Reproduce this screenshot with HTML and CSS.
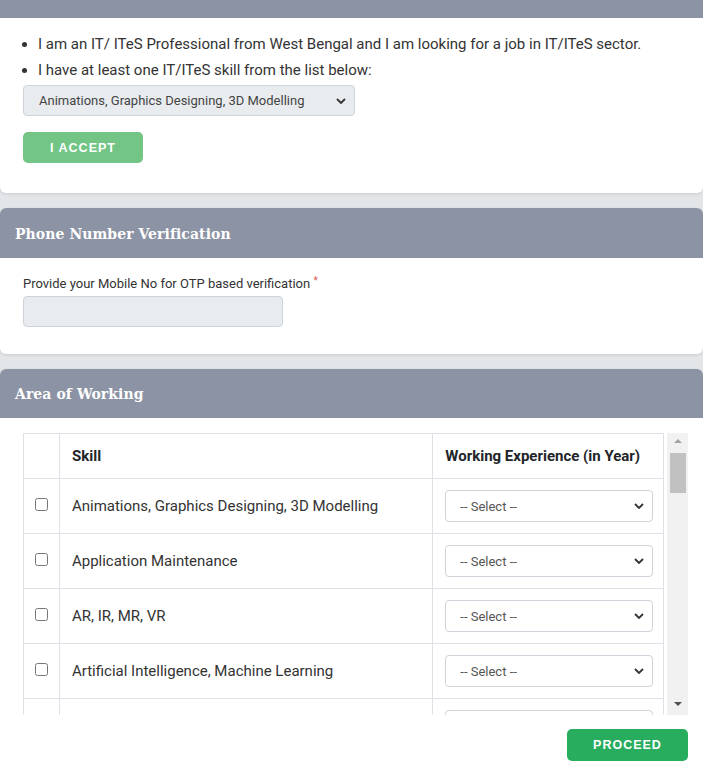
FILE: index.html
```html
<!DOCTYPE html>
<html lang="en">
<head>
    <meta charset="UTF-8">
    <meta name="viewport" content="width=device-width, initial-scale=1.0">
    <title>IT/ITeS Registration</title>
    <link rel="stylesheet" href="styles.css">
</head>
<body>
    <div class="page">
        <!-- declaration -->
        <div class="card card-first">
            <div class="card-head card-head-top"></div>
            <div class="card-body decl">
                <ul class="decl-list">
                    <li>I am an IT/ ITeS Professional from West Bengal and I am looking for a job in IT/ITeS sector.</li>
                    <li>I have at least one IT/ITeS skill from the list below:</li>
                </ul>
                <div class="select-wrap select-grey">
                    <select class="form-select">
                        <option>Animations, Graphics Designing, 3D Modelling</option>
                        <option>Application Maintenance</option>
                        <option>AR, IR, MR, VR</option>
                    </select>
                    <svg class="chev" viewBox="0 0 10 6" width="10" height="6"><path d="M1 1l4 4 4-4" fill="none" stroke="#333" stroke-width="1.8"/></svg>
                </div>
                <button class="btn btn-accept">I ACCEPT</button>
            </div>
        </div>

        <!-- phone -->
        <div class="card">
            <div class="card-head"><h2>Phone Number Verification</h2></div>
            <div class="card-body phone">
                <label class="field-label">Provide your Mobile No for OTP based verification <span class="req">*</span></label>
                <input type="text" class="form-input" value="" readonly>
            </div>
        </div>

        <!-- skills -->
        <div class="card card-last">
            <div class="card-head"><h2>Area of Working</h2></div>
            <div class="card-body area">
                <div class="scroll-box">
                    <div class="scroll">
                        <table class="skills">
                            <thead>
                                <tr>
                                    <th class="col-chk"></th>
                                    <th class="col-skill">Skill</th>
                                    <th class="col-exp">Working Experience (in Year)</th>
                                </tr>
                            </thead>
                            <tbody id="skillRows"></tbody>
                        </table>
                    </div>
                    <div class="fake-bar">
                        <span class="bar-btn"><i class="tri-up"></i></span>
                        <span class="bar-thumb"></span>
                        <span class="bar-fill"></span>
                        <span class="bar-btn"><i class="tri-down"></i></span>
                    </div>
                </div>
                <div class="actions">
                    <button class="btn btn-proceed">PROCEED</button>
                </div>
            </div>
        </div>
    </div>

    <script>
        // skill list
        const skills = [
            'Animations, Graphics Designing, 3D Modelling',
            'Application Maintenance',
            'AR, IR, MR, VR',
            'Artificial Intelligence, Machine Learning',
            ''
        ];

        const tbody = document.getElementById('skillRows');
        skills.forEach(name => {
            const tr = document.createElement('tr');
            tr.innerHTML = `
                <td class="col-chk">${name ? '<input type="checkbox">' : ''}</td>
                <td class="col-skill">${name}</td>
                <td class="col-exp">
                    <div class="select-wrap">
                        <select class="form-select">
                            <option>${name ? '-- Select --' : ''}</option>
                            <option>0-1</option>
                            <option>1-3</option>
                            <option>3-5</option>
                            <option>5+</option>
                        </select>
                        ${name ? '<svg class="chev" viewBox="0 0 10 6" width="10" height="6"><path d="M1 1l4 4 4-4" fill="none" stroke="#333" stroke-width="1.8"/></svg>' : ''}
                    </div>
                </td>`;
            tbody.appendChild(tr);
        });
    </script>
</body>
</html>
```

FILE: styles.css
```css
*{box-sizing:border-box}
body{margin:0;background:#e3e6e9;font-family:Roboto,"Liberation Sans",sans-serif;color:#333}
.page{display:flex;flex-direction:column;gap:15px}
.card{background:#fff;border-radius:6px;box-shadow:0 1px 3px rgba(0,0,0,0.12);overflow:hidden}
.card-first{border-radius:0 0 6px 6px}
.card-last{border-radius:6px 6px 0 0}
.card-head{background:#8c93a4;height:50px;display:flex;align-items:center;padding:0 15px}
.card-head-top{height:18px}
.card-last .card-head{height:49px}
.card-head h2{margin:0;color:#fff;font-family:"DejaVu Serif Condensed","DejaVu Serif",serif;font-weight:bold;font-size:15.5px;letter-spacing:0.1px}
.card-body{padding:13px 15px 0 23px}
.decl{padding-bottom:30px}
.decl-list{margin:0;padding-left:15px;font-size:15px;line-height:26px;color:#333}
.select-wrap{position:relative;width:100%}
.select-wrap .chev{position:absolute;right:9px;top:50%;margin-top:-3px;pointer-events:none}
.select-grey{width:332px;margin-top:2px}
.form-select{-webkit-appearance:none;appearance:none;width:100%;height:32px;border:1px solid #ced4da;border-radius:4px;background:#fff;font-family:Roboto,"Liberation Sans",sans-serif;font-size:13px;color:#555;padding:0 30px 0 14px}
.select-grey .form-select{background:#e9ecef;height:31px;padding-left:15px;color:#444}
.btn{border:none;border-radius:5px;color:#fff;font-family:"Liberation Sans",Arial,sans-serif;font-weight:bold;letter-spacing:1px;cursor:pointer}
.btn-accept{display:block;margin-top:16px;width:120px;height:31px;background:#28a745;opacity:0.65;font-size:12.5px}
.phone{padding-top:18px;padding-bottom:27px}
.field-label{display:block;font-size:13px;line-height:16px;color:#333;margin-bottom:4px}
.req{color:#d9534f;font-size:10px;vertical-align:top;position:relative;top:-3px}
.form-input{display:block;width:260px;height:31px;border:1px solid #ced4da;border-radius:4px;background:#e9ecef}
.area{padding-top:15px;padding-bottom:24px}
.scroll-box{display:flex;height:282px}
.scroll{flex:1;overflow:hidden}
.fake-bar{width:21px;background:#f1f1f1;display:flex;flex-direction:column}
.bar-btn{height:20px;display:flex;align-items:center;justify-content:center}
.tri-up{width:0;height:0;border-left:4px solid transparent;border-right:4px solid transparent;border-bottom:4px solid #a3a3a3;margin-top:-4px}
.tri-down{width:0;height:0;border-left:4px solid transparent;border-right:4px solid transparent;border-top:4px solid #505050;margin-top:-2px}
.bar-thumb{height:40px;margin:0 2px 0 3px;background:#c1c1c1}
.bar-fill{flex:1}
.skills{width:641px;border-collapse:collapse;font-size:15px;color:#333}
.skills th,.skills td{border:1px solid #dee2e6;text-align:left;vertical-align:middle}
.skills th{height:45px;font-weight:bold;color:#212529;padding:0 12px}
.skills td{height:55px;padding:0 12px}
.skills .col-chk{width:36px;padding:0;text-align:center}
.skills .col-skill{width:374px}
.skills .col-exp{width:231px;padding-right:10px}
.skills input[type=checkbox]{width:13px;height:13px;margin:0}
.actions{display:flex;justify-content:flex-end;margin-top:14px}
.btn-proceed{width:121px;height:32px;background:#28ad5f;font-size:12.5px}
```
